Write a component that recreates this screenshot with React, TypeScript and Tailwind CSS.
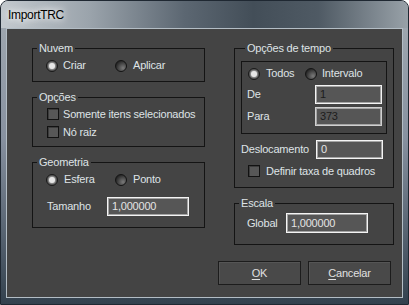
import React from 'react'

function Radio({ on }: { on?: boolean }) {
  if (on)
    return (
      <span className="flex h-[12px] w-[12px] shrink-0 items-center justify-center rounded-full border border-[#141414] bg-[#3c3c3c]">
        <span className="h-[6px] w-[6px] rounded-full bg-[#e6e6e6] shadow-[0_0_2px_1px_#aaaaaa]" />
      </span>
    )
  return (
    <span className="h-[12px] w-[12px] shrink-0 rounded-full border border-[#141414] bg-[radial-gradient(circle_at_70%_70%,#7a7a7a,#262626_75%)]" />
  )
}

function Check() {
  return <span className="h-[12px] w-[12px] shrink-0 border border-[#121212] bg-[#575757] shadow-[inset_1px_1px_0_#3c3c3c]" />
}

function Field({ value, w, h = 'h-[19px]', dim, faint }: { value: string; w: string; h?: string; dim?: boolean; faint?: boolean }) {
  return (
    <div
      className={`${w} ${h} flex items-center border ${faint ? 'border-[#d0d0d0]' : 'border-[#f4f4f4]'} bg-[#565656] pl-[4px] shadow-[inset_0_0_0_1px_#a4a4a4] ${dim ? 'text-[#1c1c1c]' : 'text-[#e4e4e4]'}`}
    >
      {value}
    </div>
  )
}

function Group({ title, className, children }: { title: string; className: string; children: React.ReactNode }) {
  return (
    <fieldset className={`border border-[#141414] ${className}`}>
      <legend className="ml-[4px] px-[2px] leading-[13px]">{title}</legend>
      {children}
    </fieldset>
  )
}

export default function App() {
  return (
    <div className="flex h-[305px] w-[409px] flex-col rounded-t-[8px] border border-[#1f2832] bg-[linear-gradient(to_bottom,#a3abb2_0%,#8791a0_45%,#33414e_100%)] px-[5px] pb-[6px] font-['Liberation_Sans',Arial,sans-serif] text-[11px] tracking-[-0.2px] text-[#dfe3e6]">
      <div className="-mx-[5px] flex h-[27px] shrink-0 items-center rounded-t-[7px] bg-[linear-gradient(to_right,#c3c9ce_0%,#9aa3ab_22%,#5c6772_45%,#434e58_62%,#4f5a64_78%,#98a1a8_100%)] px-[7px]">
        <span className="text-[12px] tracking-[-0.3px] text-black [text-shadow:0_0_6px_#fff,0_0_10px_#fff]">ImportTRC</span>
      </div>

      <div className="flex flex-1 flex-col border border-[#b3bdc5] bg-[#444444] pl-[25px] pt-[13px]">
        <div className="flex items-start gap-[29px]">
          {/* left column */}
          <div className="flex w-[173px] flex-col gap-[9px]">
            <Group title="Nuvem" className="h-[40px]">
              <div className="mt-[4px] flex h-[13px] items-center pl-[13px]">
                <div className="flex w-[69px] items-center gap-[5px]">
                  <Radio on />
                  <span>Criar</span>
                </div>
                <div className="flex items-center gap-[6px]">
                  <Radio />
                  <span>Aplicar</span>
                </div>
              </div>
            </Group>

            <Group title="Opções" className="h-[56px]">
              <div className="mt-[4px] flex flex-col gap-[6px] pl-[14px]">
                <div className="flex h-[12px] items-center gap-[4px]">
                  <Check />
                  <span className="whitespace-nowrap">Somente itens selecionados</span>
                </div>
                <div className="flex h-[12px] items-center gap-[4px]">
                  <Check />
                  <span>Nó raiz</span>
                </div>
              </div>
            </Group>

            <Group title="Geometria" className="h-[72px]">
              <div className="mt-[4px] flex h-[13px] items-center pl-[13px]">
                <div className="flex w-[69px] items-center gap-[6px]">
                  <Radio on />
                  <span>Esfera</span>
                </div>
                <div className="flex items-center gap-[6px]">
                  <Radio />
                  <span>Ponto</span>
                </div>
              </div>
              <div className="mt-[11px] flex items-center pl-[14px]">
                <span className="w-[60px]">Tamanho</span>
                <Field value="1,000000" w="w-[82px]" />
              </div>
            </Group>
          </div>

          {/* right column */}
          <div className="flex w-[160px] flex-col gap-[9px]">
            <Group title="Opções de tempo" className="h-[146px] px-[6px]">
              <div className="mt-[6px] h-[73px] border border-[#141414] pl-[5px] pr-[4px] pt-[5px]">
                <div className="flex h-[13px] items-center pl-[1px]">
                  <div className="flex w-[57px] items-center gap-[6px]">
                    <Radio on />
                    <span>Todos</span>
                  </div>
                  <div className="flex items-center gap-[5px]">
                    <Radio />
                    <span>Intervalo</span>
                  </div>
                </div>
                <div className="mt-[5px] flex items-center justify-between">
                  <span>De</span>
                  <Field value="1" w="w-[67px]" dim />
                </div>
                <div className="mt-[3px] flex items-center justify-between">
                  <span>Para</span>
                  <Field value="373" w="w-[67px]" dim faint />
                </div>
              </div>
              <div className="mt-[6px] flex items-center justify-between pr-[4px]">
                <span>Deslocamento</span>
                <Field value="0" w="w-[67px]" />
              </div>
              <div className="mt-[6px] flex h-[12px] w-[136px] items-center gap-[6px] overflow-hidden pl-[7px]">
                <Check />
                <span className="whitespace-nowrap">Definir taxa de quadros</span>
              </div>
            </Group>

            <Group title="Escala" className="h-[48px]">
              <div className="mt-[3px] flex items-center pl-[12px]">
                <span className="w-[39px]">Global</span>
                <Field value="1,000000" w="w-[82px]" h="h-[20px]" />
              </div>
            </Group>
          </div>
        </div>

        <div className="mt-[16px] flex justify-end gap-[7px] pr-[11px]">
          <button className="h-[24px] w-[83px] border border-[#1c1c1c] bg-[#494949] text-[#e0e0e0] shadow-[inset_1px_1px_0_#555]">
            <span className="underline underline-offset-2">O</span>K
          </button>
          <button className="h-[24px] w-[83px] border border-[#1c1c1c] bg-[#494949] text-[#e0e0e0] shadow-[inset_1px_1px_0_#555]">
            <span className="underline underline-offset-2">C</span>ancelar
          </button>
        </div>
      </div>
    </div>
  )
}
